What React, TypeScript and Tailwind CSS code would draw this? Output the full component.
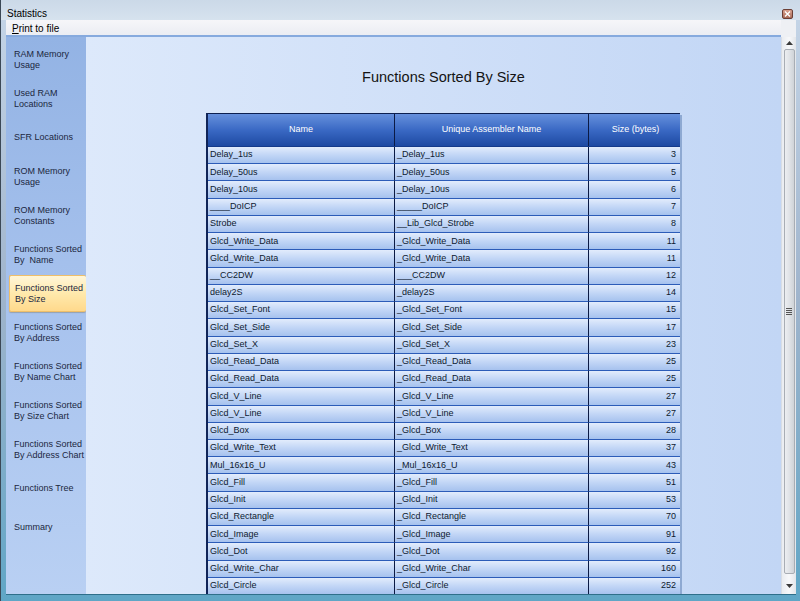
import React from 'react';

const font = { fontFamily: '"Liberation Sans", Arial, sans-serif' };

const navItems = [
  'RAM Memory\nUsage',
  'Used RAM\nLocations',
  'SFR Locations',
  'ROM Memory\nUsage',
  'ROM Memory\nConstants',
  'Functions Sorted\nBy  Name',
  'Functions Sorted\nBy Size',
  'Functions Sorted\nBy Address',
  'Functions Sorted\nBy Name Chart',
  'Functions Sorted\nBy Size Chart',
  'Functions Sorted\nBy Address Chart',
  'Functions Tree',
  'Summary',
];

const rows: [string, string, string][] = [
  ['Delay_1us', '_Delay_1us', '3'],
  ['Delay_50us', '_Delay_50us', '5'],
  ['Delay_10us', '_Delay_10us', '6'],
  ['____DoICP', '_____DoICP', '7'],
  ['Strobe', '__Lib_Glcd_Strobe', '8'],
  ['Glcd_Write_Data', '_Glcd_Write_Data', '11'],
  ['Glcd_Write_Data', '_Glcd_Write_Data', '11'],
  ['__CC2DW', '___CC2DW', '12'],
  ['delay2S', '_delay2S', '14'],
  ['Glcd_Set_Font', '_Glcd_Set_Font', '15'],
  ['Glcd_Set_Side', '_Glcd_Set_Side', '17'],
  ['Glcd_Set_X', '_Glcd_Set_X', '23'],
  ['Glcd_Read_Data', '_Glcd_Read_Data', '25'],
  ['Glcd_Read_Data', '_Glcd_Read_Data', '25'],
  ['Glcd_V_Line', '_Glcd_V_Line', '27'],
  ['Glcd_V_Line', '_Glcd_V_Line', '27'],
  ['Glcd_Box', '_Glcd_Box', '28'],
  ['Glcd_Write_Text', '_Glcd_Write_Text', '37'],
  ['Mul_16x16_U', '_Mul_16x16_U', '43'],
  ['Glcd_Fill', '_Glcd_Fill', '51'],
  ['Glcd_Init', '_Glcd_Init', '53'],
  ['Glcd_Rectangle', '_Glcd_Rectangle', '70'],
  ['Glcd_Image', '_Glcd_Image', '91'],
  ['Glcd_Dot', '_Glcd_Dot', '92'],
  ['Glcd_Write_Char', '_Glcd_Write_Char', '160'],
  ['Glcd_Circle', '_Glcd_Circle', '252'],
  ['', '', ''],
];

const cell =
  'h-full flex items-center border-b border-[#2c5cb8] bg-gradient-to-b from-[#e2ecfc] via-[#c2d6f6] to-[#a6c2ee]';

export default function App() {
  return (
    <div
      className="w-[800px] h-[601px] flex flex-col overflow-hidden bg-gradient-to-b from-[#c6d6e8] via-[#9fb4cc] to-[#5fa6c6] border-l border-[#3b4856] text-[#101828]"
      style={font}
    >
      {/* Title bar */}
      <div className="h-[20px] shrink-0 flex items-center justify-between pl-[6px] pr-[7px] bg-gradient-to-b from-[#cbd9e8] to-[#d6e2ee]">
        <span className="text-[10px] text-black pt-[7px]">Statistics</span>
        <div className="mt-[7px] w-[11px] h-[10px] rounded-[2px] border border-[#6b3f36] bg-gradient-to-b from-[#d9a08e] to-[#a86a58] flex items-center justify-center">
          <svg width="7" height="6" viewBox="0 0 7 6">
            <path d="M1 0.5 L6 5.5 M6 0.5 L1 5.5" stroke="#fff" strokeWidth="1.4" />
          </svg>
        </div>
      </div>

      <div className="flex-1 flex flex-col ml-[5px] mr-[4px] mb-[6px] min-h-0">
        {/* Menu bar */}
        <div className="h-[17px] shrink-0 flex bg-[#eceef3]">
          <div className="flex-1 flex items-center pl-[6px] pt-[2px] bg-gradient-to-b from-[#f6f6f9] to-[#ebedf3] border-b-2 border-[#86aade]">
            <span className="text-[10px] text-black">
              <span className="underline">P</span>rint to file
            </span>
          </div>
          <div className="w-[15px] bg-[#eef0f4]" />
        </div>

        <div className="flex-1 flex min-h-0 border-b border-[#2f6f8a]">
          {/* Sidebar */}
          <div className="w-[80px] shrink-0 flex flex-col pt-[3px] bg-gradient-to-b from-[#93b3e4] via-[#a8c3ee] to-[#b9d0f3]">
            {navItems.map((label, i) => {
              const active = i === 6;
              return (
                <div key={i} className="h-[39px] shrink-0 py-[1px] pl-[3px]">
                  <div
                    className={
                      active
                        ? 'h-full flex items-center pl-[5px] rounded-[2px] border border-[#efbf6a] border-r-0 bg-gradient-to-b from-[#fff6d8] via-[#ffe9ac] to-[#ffd98c] shadow-[0_1px_1px_rgba(120,100,60,0.35)]'
                        : 'h-full flex items-center pl-[5px]'
                    }
                  >
                    <span className="whitespace-pre text-[9px] leading-[10.5px] text-[#1b2740]">{label}</span>
                  </div>
                </div>
              );
            })}
          </div>

          {/* Main content */}
          <div className="flex-1 min-w-0 overflow-hidden bg-gradient-to-r from-[#dde9fb] to-[#c2d6f5]">
            <div className="pt-[31px] pl-[120px] w-[595px] text-center text-[14.5px] leading-[18px] text-[#141414]">
              Functions Sorted By Size
            </div>
            <div className="mt-[27px] ml-[120px] w-[476px] flex">
              <div className="w-[474px] border-l-2 border-[#102458] border-t border-t-[#0c1f50]">
                {/* Header */}
                <div className="h-[33px] grid grid-cols-[187px_194px_93px] text-white text-[9px] bg-gradient-to-b from-[#6690dc] via-[#3a69c4] to-[#1d49a2] border-b border-[#143a8a]">
                  <div className="flex items-center justify-center border-r border-[#0b1a44]">Name</div>
                  <div className="flex items-center justify-center border-r border-[#0b1a44]">Unique Assembler Name</div>
                  <div className="flex items-center justify-center">Size (bytes)</div>
                </div>
                {rows.map(([name, asm, size], i) => (
                  <div key={i} className="h-[17.24px] grid grid-cols-[187px_194px_93px] text-[9px] text-[#0e1a30]">
                    <div className={`${cell} pl-[2px] border-r border-r-[#0b1a44]`}>{name}</div>
                    <div className={`${cell} pl-[2px] border-r border-r-[#0b1a44]`}>{asm}</div>
                    <div className={`${cell} justify-end pr-[6px]`}>{size}</div>
                  </div>
                ))}
              </div>
              <div className="w-[2px] mt-[2px] bg-[#8ea9d2]" />
            </div>
          </div>

          {/* Scrollbar */}
          <div className="w-[15px] shrink-0 flex flex-col items-center bg-gradient-to-r from-[#e9ecf0] via-[#f7f8fa] to-[#e3e6ea] border-l border-[#d8dde4]">
            <div className="h-[12px] flex items-center justify-center">
              <svg width="7" height="4" viewBox="0 0 7 4">
                <path d="M0 4 L3.5 0 L7 4 Z" fill="#3a3a3a" />
              </svg>
            </div>
            <div className="flex-1 w-[11px] mb-[10px] rounded-[2px] border border-[#a8adb4] bg-gradient-to-r from-[#eceef1] via-[#dfe2e6] to-[#cfd3d8] flex items-center justify-center">
              <div className="flex flex-col gap-[1px]">
                <div className="w-[6px] h-[1px] bg-[#555]" />
                <div className="w-[6px] h-[1px] bg-[#555]" />
                <div className="w-[6px] h-[1px] bg-[#555]" />
                <div className="w-[6px] h-[1px] bg-[#555]" />
              </div>
            </div>
            <div className="h-[10px] flex items-start justify-center">
              <svg width="7" height="4" viewBox="0 0 7 4">
                <path d="M0 0 L3.5 4 L7 0 Z" fill="#3a3a3a" />
              </svg>
            </div>
          </div>
        </div>
      </div>
    </div>
  );
}
